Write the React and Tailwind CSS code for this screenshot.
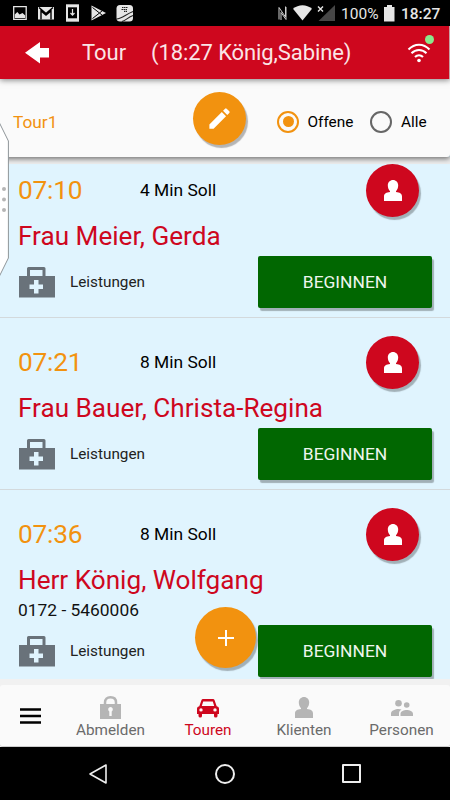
const stops = [
  { time: '07:10', duration: '4 Min Soll', name: 'Frau Meier, Gerda' },
  { time: '07:21', duration: '8 Min Soll', name: 'Frau Bauer, Christa-Regina' },
  { time: '07:36', duration: '8 Min Soll', name: 'Herr König, Wolfgang', phone: '0172 - 5460006' },
];

function PersonIcon({ className }) {
  return (
    <svg className={className} viewBox="0 0 18 21" fill="currentColor">
      <path d="M9 0c3 0 5.200 2.300 5.200 5.300 0 2.500-.9 4.700-2.200 5.900v.9c3.700.5 6 1.500 6 4.500V21H0v-4.400c0-3 2.300-4 6-4.500v-.9C4.700 10 3.800 7.800 3.800 5.300 3.800 2.300 6 0 9 0z" />
    </svg>
  );
}

function StatusBar() {
  return (
    <div className="flex h-[26px] items-center bg-black text-[#e6e6e6]">
      <svg className="ml-[12px] h-[18px] w-[124px]" viewBox="12 4 124 18" fill="none">
        <path d="M13.700 6.700h12.500v12.600H13.700z" stroke="#e6e6e6" strokeWidth="1.300" />
        <path d="M14.800 18v-3.500l2.500-2.500 2.200 2.500 3-1.500 2.700 2.500V18z" fill="#e6e6e6" />
        <path d="M38 7h16v12.500H38z" fill="#e6e6e6" />
        <path d="M41 19.500v-8.500l5 4 5-4v8.500M39 7.500l7 6 7-6" stroke="#000" strokeWidth="1.400" />
        <path d="M66 4.300h13v17.400H66z" fill="#e6e6e6" />
        <path d="M68 7.300h9v11h-9z" fill="#000" />
        <path d="M72.500 9v6M70.500 13l2 2.200 2-2.200" stroke="#e6e6e6" strokeWidth="1.200" />
        <path d="M91.500 5.500 106 13l-14.500 7.500z" fill="#e6e6e6" />
        <path d="m92.500 7.500 7 5.500-7 5.500M99.500 13l3-2.500M99.500 13l3 2.500" stroke="#000" strokeWidth="1" />
        <rect x="116.500" y="5" width="16.500" height="16.500" rx="3.500" fill="#e6e6e6" />
        <path d="M122 7.500h5.500M121.500 9.500h5.500M124 11.300h3" stroke="#222" strokeWidth="1.200" strokeDasharray="1.500 .5" />
        <path d="M116.500 19c5.500-.5 9-4.500 16.500-7.500M122 21.500c3.500-1 6-4 11-6" stroke="#222" strokeWidth="1.100" />
      </svg>
      <svg className="ml-[141px] h-[18px] w-[60px]" viewBox="277 4 60 18" fill="none">
        <path d="M279 19.500V7.500l6.500 9.500V6.500M281 20v-7.500l5 7V7" stroke="#cfcfcf" strokeWidth="1" />
        <path d="M293 8.800c5.500-4.800 13.500-4.800 19 0L302.500 20.500z" fill="#e6e6e6" />
        <path d="M335 5v16h-16.500z" fill="#474747" />
        <path d="m318 6.500 5 5m0-5-5 5" stroke="#e6e6e6" strokeWidth="1.400" />
      </svg>
      <span className="ml-[4px] w-[43px] pt-[3px] text-[15.500px] leading-none">100%</span>
      <svg className="h-[17px] w-[11px]" viewBox="0 0 11 17" fill="currentColor">
        <path d="M3 0h5v2h2.500v14.500H0V2h3z" />
      </svg>
      <span className="ml-[6px] pt-[3px] text-[15.500px] font-medium leading-none">18:27</span>
    </div>
  );
}

function Header() {
  return (
    <header className="relative z-20 flex h-[53px] items-center border-r border-[#c9a0a4] bg-[#ce071e] text-[#fbe4e6] shadow-[0_1px_6px_rgba(0,0,0,0.5)]">
      <svg className="ml-[25px] h-[22px] w-[24px]" viewBox="0 0 24 22" fill="#fff">
        <path d="M0 10.800 15 0v6h9v9.500h-9V21.500z" />
      </svg>
      <h1 className="ml-[33px] w-[69px] pt-[1px] text-[22px] leading-none">Tour</h1>
      <span className="whitespace-pre pt-[1px] text-[22px] leading-none tracking-[-0.090px]">(18:27 König,Sabine)</span>
      <div className="relative ml-auto mr-[18px] h-[20px] w-[24px]">
        <svg className="h-[20px] w-[24px]" viewBox="0 0 24 20" fill="none" stroke="#fff" strokeWidth="2">
          <path d="M1.500 6.500c6-6.500 15-6.500 21 0M4.500 10.300c4.200-4.500 10.800-4.500 15 0M8 14c2.300-2.500 5.700-2.500 8 0" />
          <circle cx="12" cy="17.500" r="1.800" fill="#fff" stroke="none" />
        </svg>
        <span className="absolute -top-[8px] left-[18px] size-[9px] rounded-full bg-[#8ae88c]" />
      </div>
    </header>
  );
}

function FilterBar() {
  return (
    <div className="relative z-10 flex h-[78px] items-center rounded-b-[3px] bg-[#fafafa] pt-[7px] shadow-[0_2px_5px_rgba(0,0,0,0.5)]">
      <span className="ml-[13px] w-[180px] pt-[2px] text-[17.300px] leading-none text-[#f2920f]">Tour1</span>
      <button className="mb-[7px] flex size-[53px] items-center justify-center rounded-full bg-[#f2920f] shadow-[2px_3px_1px_rgba(0,0,0,0.28)]">
        <svg className="size-[27px]" viewBox="0 0 24 24" fill="#fff">
          <path d="M3 17.250V21h3.750L17.810 9.940l-3.750-3.750L3 17.250zM20.710 7.040a1 1 0 0 0 0-1.410l-2.340-2.340a1 1 0 0 0-1.410 0l-1.830 1.830 3.750 3.750 1.830-1.830z" />
        </svg>
      </button>
      <span className="ml-[31px] flex size-[22px] items-center justify-center rounded-full border-2 border-[#f2920f]">
        <span className="size-[11px] rounded-full bg-[#f2920f]" />
      </span>
      <span className="ml-[8.500px] w-[62.500px] pt-[2px] text-[15.400px] leading-none text-black">Offene</span>
      <span className="size-[22px] rounded-full border-2 border-[#666]" />
      <span className="ml-[9px] pt-[2px] text-[15.400px] leading-none text-black">Alle</span>
    </div>
  );
}

function Stop({ time, duration, name, phone }) {
  return (
    <li className="shrink-0 border-b border-[#d3d9dc] pb-[9px] pl-[18px] pt-[18px]">
      <div className="flex h-[53px] items-center">
        <span className="w-[122px] text-[26.300px] leading-none tracking-[-0.250px] text-[#f2920f]">{time}</span>
        <span className="pt-[1px] text-[17.400px] leading-none text-black">{duration}</span>
        <button className="ml-auto mr-[31px] flex size-[53px] items-center justify-center rounded-full bg-[#ce071e] text-white shadow-[2px_3px_1px_rgba(0,0,0,0.28)]">
          <PersonIcon className="h-[21px] w-[18px]" />
        </button>
      </div>
      <div className="flex h-[39px] items-center whitespace-nowrap text-[26.150px] leading-none text-[#ce071e]">{name}</div>
      {phone && <div className="h-[25px] text-[17.400px] leading-[20px] text-[#111]">{phone}</div>}
      <div className="flex h-[52px] items-center">
        <svg className="ml-[1px] h-[31px] w-[36px]" viewBox="0 0 36 31">
          <path fillRule="evenodd" fill="#69727a" d="M9.500 0h15.500q1.500 0 1.500 1.500V9H36v21.500H0V9h8V1.500Q8 0 9.500 0zM11 3v6h12.500V3zM15 13v4.500h-4.500v4.500H15v4.500h4.500V22H24v-4.500h-4.500V13z" />
        </svg>
        <span className="ml-[15px] w-[188px] pt-[2px] text-[15.300px] leading-none text-[#222]">Leistungen</span>
        <button className="h-[52px] w-[174px] rounded-[2px] bg-[#016701] pt-[2px] text-[17.400px] leading-none text-[#eef6ee] shadow-[2px_3px_1px_rgba(0,0,0,0.28)]">BEGINNEN</button>
      </div>
    </li>
  );
}

function BottomNav() {
  return (
    <nav className="relative z-10 flex h-[68px] bg-[#f1f1f1] pt-[6px] text-[15.300px] leading-none text-[#6b6b6b]">
      <div className="flex h-[62px] w-full rounded-[3px] border-b border-[#ccc] bg-[#fafafa]">
        <div className="flex w-[61px] items-center justify-center">
          <svg className="h-[16px] w-[21px]" viewBox="0 0 21 16" fill="none" stroke="#000" strokeWidth="2.600">
            <path d="M0 1.500h21M0 8h21M0 14.500h21" />
          </svg>
        </div>
        <div className="flex w-[99px] flex-col items-center">
          <svg className="mt-[11px] h-[23px] w-[21px]" viewBox="0 0 21 23">
            <path d="M5 9V6.500C5 3 7 1.300 10.500 1.300S16 3 16 6.500V9" fill="none" stroke="#b5b5b5" strokeWidth="2.500" />
            <path fillRule="evenodd" fill="#b5b5b5" d="M0 8h21v15H0zM10.500 11a2.500 2.500 0 0 0-1.200 4.600V20h2.400v-4.400A2.500 2.500 0 0 0 10.500 11z" />
          </svg>
          <span className="mt-[4px]">Abmelden</span>
        </div>
        <div className="flex w-[96px] flex-col items-center text-[#ce071e]">
          <svg className="mt-[14px] h-[19px] w-[22px]" viewBox="0 0 22 19" fill="currentColor">
            <path fillRule="evenodd" d="M4.500 1Q4.900 0 6 0h10q1.100 0 1.500 1l2.200 6.200Q22 7.800 22 9.500V15h-1.500v2q0 1.500-1.800 1.500T17 17v-2H5v2q0 1.500-1.700 1.500T1.500 17v-2H0V9.500Q0 7.800 2.300 7.200zM6.200 2.500 4.800 7h12.400l-1.400-4.500zM4 9.200a1.700 1.700 0 1 0 0 3.400 1.700 1.700 0 0 0 0-3.400zM18 9.200a1.700 1.700 0 1 0 0 3.400 1.700 1.700 0 0 0 0-3.400z" />
          </svg>
          <span className="mt-[5px]">Touren</span>
        </div>
        <div className="flex w-[96px] flex-col items-center">
          <PersonIcon className="mt-[12px] h-[21px] w-[18px] text-[#b5b5b5]" />
          <span className="mt-[5px]">Klienten</span>
        </div>
        <div className="flex w-[98px] flex-col items-center pl-[1px]">
          <svg className="mt-[15px] h-[16px] w-[22px]" viewBox="0 0 22 16" fill="#b5b5b5">
            <circle cx="7.500" cy="3.300" r="3.300" />
            <circle cx="15.700" cy="5" r="2.800" />
            <path d="M0 16v-2.500C0 10.500 4.500 9 7.500 9q1.600 0 3 .5C8.500 10.600 8 12 8 13.500V16zM9.500 16v-2.200c0-2.600 3.500-3.800 6.200-3.800s6.300 1.200 6.300 3.800V16z" />
          </svg>
          <span className="mt-[7px]">Personen</span>
        </div>
      </div>
    </nav>
  );
}

function SystemNav() {
  return (
    <div className="flex h-[53px] items-center bg-black">
      <svg className="ml-[88px] h-[22px] w-[20px]" viewBox="0 0 20 22" fill="none" stroke="#eee" strokeWidth="1.600" strokeLinejoin="round">
        <path d="M18 2v18L2 11z" />
      </svg>
      <span className="ml-[107px] size-[20px] rounded-full border-2 border-[#eee]" />
      <span className="ml-[107px] size-[19px] rounded-[1px] border-2 border-[#eee]" />
    </div>
  );
}

export default function App() {
  return (
    <div className="relative flex h-[800px] w-[450px] flex-col overflow-hidden bg-[#e0f4fe] font-['Roboto',sans-serif]">
      <StatusBar />
      <Header />
      <FilterBar />
      <div className="h-[7px] shrink-0 bg-[#ececec]" />
      <ul className="flex h-[515px] flex-col overflow-hidden">
        <li className="-mb-[18px] h-0 shrink-0" />
        {stops.map((stop) => (
          <Stop key={stop.time} {...stop} />
        ))}
      </ul>
      <BottomNav />
      <SystemNav />
      <svg className="absolute left-0 top-[122px] z-30 h-[156px] w-[10px]" viewBox="0 122 10 156">
        <path d="M-1 122 8.400 141v117L-1 277z" fill="#fff" stroke="#8f9599" strokeWidth="1" />
        <g fill="#b5b5b5">
          <circle cx="4" cy="189" r="2" />
          <circle cx="4" cy="199.500" r="2" />
          <circle cx="4" cy="210" r="2" />
        </g>
      </svg>
      <button className="absolute left-[195px] top-[607px] z-[5] flex size-[61px] items-center justify-center rounded-full bg-[#f2920f] shadow-[2px_3px_1px_rgba(0,0,0,0.28)]">
        <svg className="size-[16px]" viewBox="0 0 16 16" stroke="#fff" strokeWidth="2">
          <path d="M8 0v16M0 8h16" />
        </svg>
      </button>
    </div>
  );
}
